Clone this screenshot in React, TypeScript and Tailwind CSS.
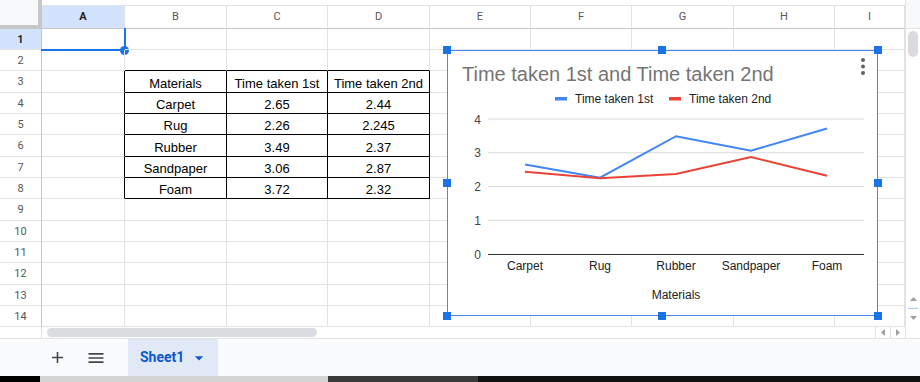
import { MdAdd, MdMenu, MdArrowDropDown } from "react-icons/md";

const cols = ["A", "B", "C", "D", "E", "F", "G", "H", "I"];
const colW = ["w-[83px]", "w-[102px]", "w-[101px]", "w-[102px]", "w-[101px]", "w-[101px]", "w-[102px]", "w-[101px]", "w-[70px]"];
const rowH = ["h-[21px]", "h-[21px]", "h-[22px]", "h-[21px]", "h-[21px]", "h-[22px]", "h-[21px]", "h-[21px]", "h-[22px]", "h-[21px]", "h-[21px]", "h-[22px]", "h-[21px]", "h-[21px]"];

const table: Record<number, string[]> = {
  3: ["Materials", "Time taken 1st", "Time taken 2nd"],
  4: ["Carpet", "2.65", "2.44"],
  5: ["Rug", "2.26", "2.245"],
  6: ["Rubber", "3.49", "2.37"],
  7: ["Sandpaper", "3.06", "2.87"],
  8: ["Foam", "3.72", "2.32"],
};

const cats = ["Carpet", "Rug", "Rubber", "Sandpaper", "Foam"];
const first = [2.65, 2.26, 3.49, 3.06, 3.72];
const second = [2.44, 2.245, 2.37, 2.87, 2.32];
const xs = [77, 152, 228, 303, 379];
const yv = (v: number) => 203 - v * 33.75;

function Cell({ r, c }: { r: number; c: number }) {
  const inTable = r >= 3 && r <= 8;
  const rightBlack = inTable && c <= 3;
  const bottomBlack = c >= 1 && c <= 3 && r >= 2 && r <= 8;
  const text = inTable && c >= 1 && c <= 3 ? table[r][c - 1] : "";
  return (
    <div
      className={`relative shrink-0 flex items-end justify-center pb-[1px] border-r border-b text-[13px] leading-[15px] text-black ${colW[c]} ${
        rightBlack ? "border-r-black" : "border-r-[#e2e2e2]"
      } ${bottomBlack ? "border-b-black" : "border-b-[#e2e2e2]"}`}
    >
      {text}
      {r === 1 && c === 0 && (
        <>
          <div className="absolute -left-px -top-px right-[-2px] bottom-[-2px] border-r-2 border-b-2 border-[#1a73e8]" />
          <div className="absolute right-[-5px] bottom-[-6px] w-[9px] h-[9px] rounded-full bg-[#1a73e8]" />
        </>
      )}
    </div>
  );
}

function Handle({ pos }: { pos: string }) {
  return <div className={`absolute w-[8px] h-[8px] bg-[#1a73e8] ${pos}`} />;
}

function Chart() {
  return (
    <div className="absolute left-[447px] top-[50px] w-[431px] h-[266px] border border-[#4a8af0] bg-white">
      <svg width="429" height="264" className="block" style={{ fontFamily: "'Liberation Sans', Arial, sans-serif" }}>
        <text x="14" y="30" fontSize="20" fill="#757575">Time taken 1st and Time taken 2nd</text>
        <circle cx="415" cy="9" r="2" fill="#5f6368" />
        <circle cx="415" cy="15.5" r="2" fill="#5f6368" />
        <circle cx="415" cy="22" r="2" fill="#5f6368" />

        <rect x="107" y="46" width="12" height="3.5" fill="#4285f4" />
        <text x="127" y="52" fontSize="12" fill="#222">Time taken 1st</text>
        <rect x="221" y="46" width="12" height="3.5" fill="#ea4335" />
        <text x="241" y="52" fontSize="12" fill="#222">Time taken 2nd</text>

        {[1, 2, 3, 4].map((v) => (
          <line key={v} x1="40" x2="416" y1={yv(v)} y2={yv(v)} stroke="#d9d9d9" strokeWidth="1" />
        ))}
        <line x1="40" x2="416" y1={203.5} y2={203.5} stroke="#333" strokeWidth="1" />
        {[0, 1, 2, 3, 4].map((v) => (
          <text key={v} x="33" y={yv(v) + 4.5} fontSize="12" fill="#444" textAnchor="end">
            {v}
          </text>
        ))}

        <polyline
          points={xs.map((x, i) => `${x},${yv(first[i])}`).join(" ")}
          fill="none"
          stroke="#4285f4"
          strokeWidth="2"
        />
        <polyline
          points={xs.map((x, i) => `${x},${yv(second[i])}`).join(" ")}
          fill="none"
          stroke="#ea4335"
          strokeWidth="2"
        />

        {cats.map((c, i) => (
          <text key={c} x={xs[i]} y="219" fontSize="12" fill="#222" textAnchor="middle">
            {c}
          </text>
        ))}
        <text x="228" y="248" fontSize="12" fill="#222" textAnchor="middle">Materials</text>
      </svg>

      <Handle pos="-left-[5px] -top-[5px]" />
      <Handle pos="left-[210px] -top-[5px]" />
      <Handle pos="-right-[5px] -top-[5px]" />
      <Handle pos="-left-[5px] top-[128px]" />
      <Handle pos="-right-[5px] top-[128px]" />
      <Handle pos="-left-[5px] -bottom-[5px]" />
      <Handle pos="left-[210px] -bottom-[5px]" />
      <Handle pos="-right-[5px] -bottom-[5px]" />
    </div>
  );
}

export default function App() {
  return (
    <div
      className="relative w-[920px] h-[382px] overflow-hidden bg-white"
      style={{ fontFamily: "'Liberation Sans', Arial, sans-serif" }}
    >
      <div className="flex h-[327px]">
        <div className="flex flex-col w-[905px]">
          {/* column headers */}
          <div className="flex h-[29px]">
            <div className="w-[42px] h-[29px] shrink-0 bg-[#f8f9fa] border-r-4 border-b-4 border-[#c7c7c7]" />
            <div className="flex flex-col">
              <div className="h-[5px] bg-white" />
              <div className="flex h-[24px] border-t border-[#e2e2e2]">
                {cols.map((l, i) => (
                  <div
                    key={l}
                    className={`shrink-0 flex items-center justify-center border-r border-b border-r-[#e2e2e2] border-b-[#c7c7c7] text-[11px] ${colW[i]} ${
                      i === 0 ? "bg-[#d3e3fd] font-bold text-[#1f1f1f]" : "bg-white text-[#575757]"
                    }`}
                    style={{ fontFamily: "Roboto, 'Liberation Sans', sans-serif" }}
                  >
                    {l}
                  </div>
                ))}
              </div>
            </div>
          </div>

          {/* rows */}
          {rowH.map((h, ri) => {
            const r = ri + 1;
            return (
              <div key={r} className={`flex ${h}`}>
                <div
                  className={`w-[42px] shrink-0 flex items-center justify-center pt-[2px] border-r border-b border-r-[#c7c7c7] border-b-[#e2e2e2] text-[11px] ${
                    r === 1 ? "bg-[#d3e3fd] font-bold text-[#1f1f1f]" : "bg-white text-[#575757]"
                  }`}
                  style={{ fontFamily: "Roboto, 'Liberation Sans', sans-serif" }}
                >
                  {r}
                </div>
                {cols.map((_, c) => (
                  <Cell key={c} r={r} c={c} />
                ))}
              </div>
            );
          })}
        </div>

        {/* vertical scrollbar */}
        <div className="w-[15px] flex flex-col border-l border-[#e2e2e2] bg-white">
          <div className="h-[29px] bg-[#f8f9fa] border-b border-[#e2e2e2]" />
          <div className="mx-auto mt-[2px] w-[10px] h-[26px] rounded-full bg-[#dadce0]" />
          <div className="flex-1" />
          <div className="flex flex-col items-center gap-[7px] pb-[7px]">
            <svg width="7" height="4" viewBox="0 0 7 4"><path d="M0 4 L3.5 0 L7 4 Z" fill="#9aa0a6" /></svg>
            <div className="w-[10px] h-px bg-[#a8c7fa]" />
            <svg width="7" height="4" viewBox="0 0 7 4"><path d="M0 0 L3.5 4 L7 0 Z" fill="#9aa0a6" /></svg>
          </div>
        </div>
      </div>

      {/* horizontal scrollbar */}
      <div className="flex h-[11px] bg-white">
        <div className="w-[42px] border-r border-[#e2e2e2]" />
        <div className="flex-1 flex items-center pl-[5px]">
          <div className="w-[270px] h-[9px] rounded-full bg-[#dadce0]" />
        </div>
        <div className="w-[15px] flex items-center justify-center border-l border-[#e2e2e2]">
          <svg width="4" height="7" viewBox="0 0 4 7"><path d="M4 0 L0 3.5 L4 7 Z" fill="#9aa0a6" /></svg>
        </div>
        <div className="w-[15px] flex items-center justify-center border-l border-[#e2e2e2]">
          <svg width="4" height="7" viewBox="0 0 4 7"><path d="M0 0 L4 3.5 L0 7 Z" fill="#9aa0a6" /></svg>
        </div>
        <div className="w-[15px] border-l border-[#e2e2e2]" />
      </div>

      {/* sheet tabs bar */}
      <div className="flex items-stretch h-[38px] bg-[#f9fbfd] border-t border-[#e3e3e3]">
        <div className="w-[47px]" />
        <div className="w-[20px] flex items-center justify-center text-[#444746]">
          <MdAdd size={19} />
        </div>
        <div className="w-[19px]" />
        <div className="w-[20px] flex items-center justify-center text-[#444746]">
          <MdMenu size={20} />
        </div>
        <div className="w-[22px]" />
        <div
          className="w-[90px] flex items-center pl-[12px] bg-[#e1e9f7] text-[#0b57d0] text-[14px] font-bold"
          style={{ fontFamily: "Roboto, 'Liberation Sans', sans-serif" }}
        >
          Sheet1
          <MdArrowDropDown size={20} className="ml-[5px]" />
        </div>
      </div>

      {/* bottom strip */}
      <div className="flex h-[6px]">
        <div className="w-[40px] bg-black" />
        <div className="w-[288px] bg-[#d4d4d4]" />
        <div className="w-[150px] bg-[#3a3a3a]" />
        <div className="flex-1 bg-[#111]" />
      </div>

      <Chart />
    </div>
  );
}
